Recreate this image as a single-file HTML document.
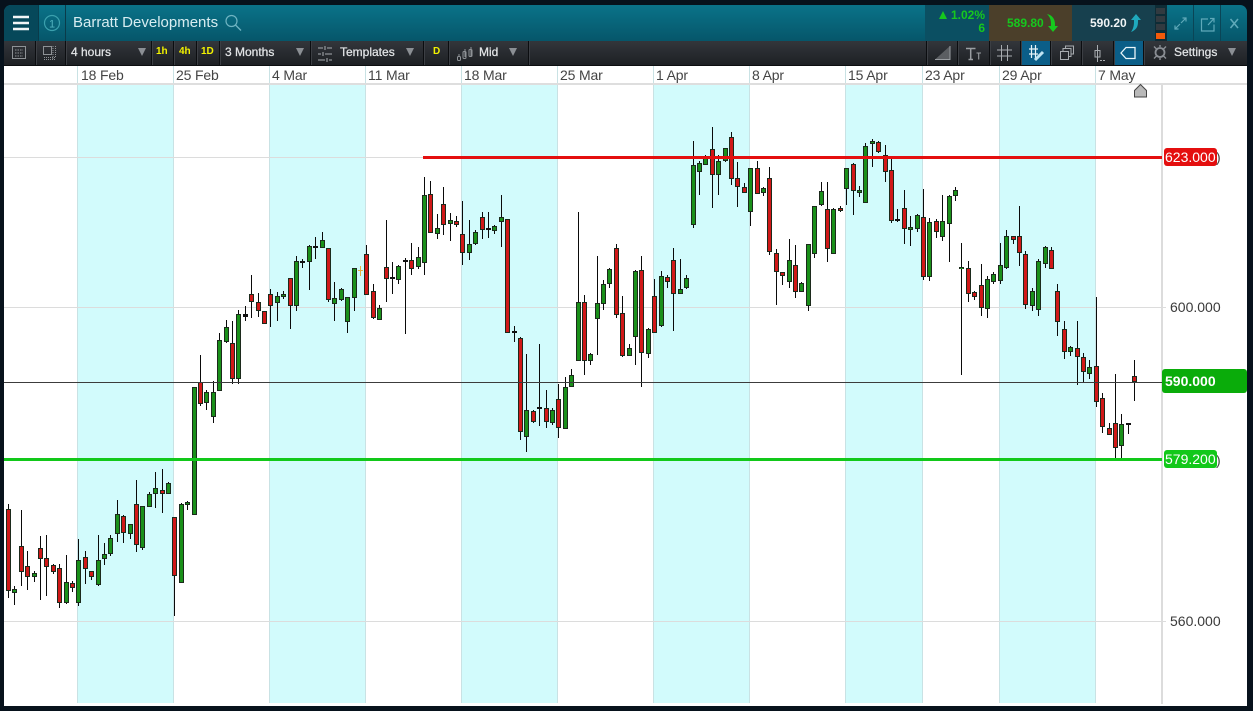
<!DOCTYPE html>
<html><head><meta charset="utf-8"><style>
html,body{margin:0;padding:0;width:1253px;height:711px;overflow:hidden;background:#07121c;font-family:"Liberation Sans",sans-serif}
.a{position:absolute}
#top{left:4px;top:5px;width:1243px;height:36px;background:linear-gradient(#0a7389,#06566a);border-radius:7px 7px 0 0;overflow:hidden}
#tb{left:4px;top:41px;width:1243px;height:24px;background:linear-gradient(#33363b,#1d2024)}
.sep{position:absolute;top:41px;width:1px;height:24px;background:#0b0d10;box-shadow:1px 0 0 #3c3f44}
.t{position:absolute;color:#e2e4e6;font-size:12px;line-height:14px;top:45px;white-space:nowrap;-webkit-text-stroke:.25px #e2e4e6}
.y{position:absolute;color:#f2f200;font-size:10px;font-weight:bold;top:46px;line-height:12px}
.arr{position:absolute;top:48px;width:0;height:0;border-left:4px solid transparent;border-right:4px solid transparent;border-top:8px solid #8b8f94}
.d{position:absolute;top:67px;font-size:14px;line-height:16px;color:#444;letter-spacing:-.15px;white-space:nowrap}
.p{position:absolute;left:1170px;font-size:14px;line-height:16px;color:#3a3a3a}
.tag{position:absolute;left:1164px;width:53px;height:18px;border-radius:3px;color:#fff;font-size:14px;line-height:18px;text-indent:1px;white-space:nowrap}
</style></head><body>
<div class="a" style="left:4px;top:65px;width:1243px;height:641px;background:#fff"></div>

<svg class="a" id="c" style="left:0;top:0" width="1253" height="711" viewBox="0 0 1253 711" shape-rendering="crispEdges">
<g fill="#d2fbfc">
<rect x="77" y="84" width="96" height="619"/><rect x="269" y="84" width="96" height="619"/><rect x="461" y="84" width="96" height="619"/><rect x="653" y="84" width="96" height="619"/><rect x="845" y="84" width="77" height="619"/><rect x="999" y="84" width="96" height="619"/>
</g>
<path d="M77.5 66V703M173.5 66V703M269.5 66V703M365.5 66V703M461.5 66V703M557.5 66V703M653.5 66V703M749.5 66V703M845.5 66V703M922.5 66V703M999.5 66V703M1095.5 66V703" stroke="#c9e2e4" fill="none"/>
<rect x="4" y="83" width="1243" height="2" fill="#dedede"/>
<rect x="1161" y="85" width="2" height="619" fill="#dcdcdc"/>
<path d="M4 157.5H1162M4 307.5H1166M4 621.5H1166" stroke="#dcdcdc" fill="none"/>
<g id="cs"></g>
<rect x="4" y="382" width="1158" height="1" fill="#3c3c3c"/>
<rect x="423" y="156" width="739" height="3" fill="#e40f0f"/>
<rect x="4" y="458" width="1158" height="3" fill="#12c81a"/>
<path d="M1134.500 90.500L1140.500 84.500L1146.500 90.500V97H1134.500Z" fill="#b9b9b9" stroke="#444" shape-rendering="auto"/>
</svg>

<div class="d" style="left:81px">18 Feb</div><div class="d" style="left:176px">25 Feb</div><div class="d" style="left:272px">4 Mar</div><div class="d" style="left:368px">11 Mar</div><div class="d" style="left:464px">18 Mar</div><div class="d" style="left:560px">25 Mar</div><div class="d" style="left:656px">1 Apr</div><div class="d" style="left:752px">8 Apr</div><div class="d" style="left:848px">15 Apr</div><div class="d" style="left:925px">23 Apr</div><div class="d" style="left:1002px">29 Apr</div><div class="d" style="left:1098px">7 May</div>

<div class="p" style="top:299px">600.000</div>
<div class="p" style="top:613px">560.000</div>
<div class="a" style="left:1216px;top:149px;font-size:14px;line-height:16px;color:#444">)</div>
<div class="tag" style="top:148px;background:#e40f0f">623.000</div>
<div class="a" style="left:1216px;top:452px;font-size:14px;line-height:16px;color:#444">)</div>
<div class="tag" style="top:450px;background:#12c81a">579.200</div>
<div class="a" style="left:1162px;top:369px;width:85px;height:24px;background:#0aac0a;border-radius:3px;color:#fff;font-size:14px;font-weight:bold;line-height:24px;text-indent:3px">590.000</div>

<div class="a" id="top"></div>
<div class="a" style="left:4px;top:5px;width:34px;height:36px;background:#06485a;border-radius:7px 0 0 0"></div>
<div class="a" style="left:38px;top:5px;width:1px;height:36px;background:#0a3b4a"></div>
<div class="a" style="left:65px;top:5px;width:1px;height:36px;background:#0a3b4a"></div>
<svg class="a" style="left:0;top:0" width="80" height="41"><path d="M13 17H29M13 23H29M13 29H29" stroke="#f2f6f7" stroke-width="2.400"/><circle cx="52" cy="23" r="7.500" fill="none" stroke="#3aa0ad" stroke-width="1.200"/><text x="52" y="27.500" font-size="11" fill="#52b2be" text-anchor="middle" font-family="Liberation Sans">1</text></svg>
<div class="a" style="left:73px;top:14px;font-size:15px;line-height:18px;color:#d7edf1;white-space:nowrap">Barratt Developments</div>
<svg class="a" style="left:224px;top:13px" width="20" height="20"><circle cx="7.500" cy="8" r="5.500" fill="none" stroke="#6fb4c2" stroke-width="1.200"/><path d="M11.500 12L17 17.500" stroke="#6fb4c2" stroke-width="1.300"/></svg>

<div class="a" style="left:925px;top:5px;width:64px;height:36px;background:#0b4f62"></div>
<div class="a" style="left:989px;top:5px;width:83px;height:36px;background:#4b3f2a"></div>
<div class="a" style="left:1072px;top:5px;width:83px;height:36px;background:#17404e"></div>
<div class="a" style="left:1155px;top:5px;width:12px;height:36px;background:#0e2c36"></div>
<div class="a" style="left:1156px;top:8px;width:9px;height:6px;background:#323a40"></div>
<div class="a" style="left:1156px;top:16px;width:9px;height:6px;background:#323a40"></div>
<div class="a" style="left:1156px;top:24px;width:9px;height:6px;background:#323a40"></div>
<div class="a" style="left:1156px;top:33px;width:9px;height:6px;background:#f25a0a"></div>
<div class="a" style="left:1193px;top:5px;width:1px;height:36px;background:#0a4556"></div>
<div class="a" style="left:1220px;top:5px;width:1px;height:36px;background:#0a4556"></div>
<div class="a" style="left:925px;top:9px;width:60px;text-align:right;color:#16c81e;font-size:12px;font-weight:bold;line-height:13px">1.02%<br>6</div>
<div class="a" style="left:939px;top:11px;width:0;height:0;border-left:4.500px solid transparent;border-right:4.500px solid transparent;border-bottom:8px solid #16c81e"></div>
<div class="a" style="left:1007px;top:16px;color:#16c81e;font-size:12px;font-weight:bold;line-height:14px">589.80</div>
<div class="a" style="left:1090px;top:16px;color:#f0f4f5;font-size:12px;font-weight:bold;line-height:14px">590.20</div>
<svg class="a" style="left:1041px;top:12px" width="20" height="22"><path d="M6 2C11 3 14 7 14 12V14H17L12 20L7 14H10V12C10 8 9 5 6 2Z" fill="#16c81e"/></svg>
<svg class="a" style="left:1124px;top:12px" width="20" height="22"><path d="M7 20C12 18 14 15 14 10V8H17L12 2L7 8H10V10C10 14 9 17 7 20Z" fill="#1fa9bd"/></svg>
<svg class="a" style="left:1167px;top:5px" width="80" height="36" fill="none" stroke="#5fa9b9" stroke-width="1.200"><path d="M14 18L19 13M15.500 13H19V16.500M13 19L8 24M8 20.500V24H11.500"/><path d="M41 14H34.500V26H47V19.500M41 20L47 13.500M43 13.500H47V17.500"/><path d="M63.500 14L71 23M71 14L63.500 23" stroke-width="1.600"/></svg>

<div class="a" id="tb"></div>
<div class="a" style="left:1020px;top:41px;width:30px;height:24px;background:#0b5e88"></div>
<div class="a" style="left:1113px;top:41px;width:30px;height:24px;background:#0b5e88"></div>
<div class="a" style="left:4px;top:65px;width:1243px;height:1px;background:#0c0e10"></div>
<div class="sep" style="left:35px"></div><div class="sep" style="left:65px"></div><div class="sep" style="left:151px"></div><div class="sep" style="left:173px"></div><div class="sep" style="left:196px"></div><div class="sep" style="left:219px"></div><div class="sep" style="left:310px"></div><div class="sep" style="left:423px"></div><div class="sep" style="left:448px"></div><div class="sep" style="left:528px"></div><div class="sep" style="left:926px"></div><div class="sep" style="left:957px"></div><div class="sep" style="left:989px"></div><div class="sep" style="left:1020px"></div><div class="sep" style="left:1050px"></div><div class="sep" style="left:1081px"></div><div class="sep" style="left:1113px"></div><div class="sep" style="left:1143px"></div>

<svg class="a" style="left:0;top:41px" width="530" height="24" fill="none" stroke="#8e9296">
<rect x="12.500" y="5.500" width="13" height="12"/><path d="M15 9H23M15 12H23M15 15H23" stroke-dasharray="1.500 1"/>
<rect x="43.500" y="5.500" width="8" height="8"/><path d="M44 16.500H55.500V5M44 18.500H55.500M53 5V18.500" stroke-dasharray="1 1"/>
<path d="M318 7H323M327 7H332M318 13H321M325 13H332M318 19H325M329 19H332" stroke-width="1.300"/><path d="M325 5V9M323 11V15M327 17V21" stroke-width="1.300"/>
<path d="M459 13V15M465 8V16M471 6V15" stroke="#8e9296"/><rect x="457.500" y="15.500" width="3" height="4" rx="1"/><rect x="463" y="10.500" width="3" height="7" rx="1"/><rect x="469" y="8.500" width="3" height="7" rx="1"/>
</svg>
<svg class="a" style="left:926px;top:41px" width="320" height="24" fill="none" stroke="#a8acb0" shape-rendering="auto">
<path d="M9 18.500H24V5Z" fill="#5b5e62" stroke="none"/><path d="M9 18.500H24V5" stroke="#9a9ea2"/>
<path d="M40 7.500H49.500M44.700 7.500V18.500M42.500 18.500H47" stroke-width="1.500" stroke="#9a9ea2"/><path d="M50.500 12H55M52.700 12V18.500" stroke-width="1.100" stroke="#9a9ea2"/>
<path d="M71 9H86M71 15H86M75.500 4V20M81.500 4V20" stroke="#a8acb0"/>
<path d="M103 8H112M103 13H112M105.500 4V17M109.500 4V17" stroke="#e8f4f8" stroke-width="1.200"/><path d="M109 19L117 11" stroke="#bfe4f2" stroke-width="3"/>
<rect x="134.500" y="10.500" width="8" height="8"/><path d="M137 10V7.500H145V15.500H143M139.500 7V5H147.500V13H145.500"/>
<path d="M171.500 4V21" stroke="#a8acb0"/><rect x="169" y="9.500" width="5" height="6.500"/><path d="M174 19.500H179" stroke-dasharray="2 1"/>
<path d="M195 12L200 6.500H209V17.500H200Z" stroke="#eaf6fa" stroke-width="1.300"/>
<circle cx="234" cy="11.500" r="4.500" stroke="#8a8e94" stroke-width="1.800"/><path d="M234 4V6M234 17V19M228 5.500L230.500 8M240 5.500L237.500 8M228 17.500L230.500 15M240 17.500L237.500 15" stroke="#8a8e94" stroke-width="1.400"/>
</svg>

<div class="t" style="left:71px">4 hours</div>
<div class="arr" style="left:138px"></div>
<div class="y" style="left:156px">1h</div><div class="y" style="left:179px">4h</div><div class="y" style="left:201px">1D</div>
<div class="t" style="left:225px">3 Months</div>
<div class="arr" style="left:296px"></div>
<div class="t" style="left:340px">Templates</div>
<div class="arr" style="left:406px"></div>
<div class="y" style="left:433px">D</div>
<div class="t" style="left:479px">Mid</div>
<div class="arr" style="left:509px"></div>
<div class="t" style="left:1174px">Settings</div>
<div class="arr" style="left:1228px"></div>

<script>
var D=[[8,504,598,509,591,'r'],[14,586,605,589,593,'g'],[20.5,510,586,546,572,'r'],[27,551,590,566,577,'r'],[34,571,582,573,577,'g'],[40,536,600,548,559,'r'],[46,535,596,558,567,'r'],[53,564,574,565,572,'r'],[59,564,608,568,603,'r'],[66,555,604,582,603,'g'],[72,581,592,583,588,'r'],[78,539,606,560,603,'g'],[85,551,584,557,569,'r'],[91,571,580,571,577,'r'],[98,535,586,560,585,'g'],[104,543,565,554,559,'g'],[110,535,556,538,554,'g'],[117,500,542,514,534,'g'],[123,515,543,516,533,'r'],[130,524,539,524,534,'g'],[136,480,552,504,545,'r'],[142,506,550,506,548,'g'],[149,492,507,494,507,'g'],[155,472,508,488,494,'g'],[162,469,513,490,494,'r'],[168,482,494,483,494,'g'],[174,517,616,517,576,'r'],[181,503,583,504,583,'g'],[187,501,510,502,505,'g'],[194,387,515,387,515,'g'],[200,355,406,382,404,'r'],[206,390,410,392,403,'g'],[213,381,423,392,417,'g'],[219,333,391,340,391,'g'],[226,320,343,327,342,'g'],[232,321,384,343,379,'r'],[238,310,384,314,379,'g'],[245,306,321,314,317,'k'],[251,275,318,294,302,'r'],[258,293,317,302,311,'r'],[264,311,324,311,324,'r'],[270,289,327,294,306,'r'],[277,292,321,296,303,'g'],[283,291,299,294,297,'g'],[290,278,329,278,306,'r'],[296,256,311,261,306,'g'],[302,259,268,261,263,'k'],[309,245,290,246,262,'g'],[315,237,259,246,248,'k'],[322,232,248,240,248,'g'],[328,248,302,248,300,'r'],[334,282,321,298,304,'g'],[341,288,301,289,300,'g'],[347,297,333,297,322,'g'],[354,268,311,268,298,'g'],[360,266,276,270,271,'o'],[366,245,295,254,295,'r'],[373,284,319,291,318,'r'],[379,305,320,308,320,'g'],[386,220,302,267,279,'r'],[392,262,294,277,279,'k'],[398,265,284,266,280,'g'],[405,258,334,260,262,'k'],[411,243,275,260,269,'r'],[418,247,269,257,267,'g'],[424,177,275,195,263,'g'],[430,181,233,194,233,'r'],[437,214,239,228,234,'g'],[443,187,235,204,225,'r'],[450,213,241,220,224,'g'],[456,216,227,221,225,'r'],[462,201,265,234,253,'r'],[469,220,260,244,253,'g'],[475,230,245,232,244,'g'],[482,212,239,217,230,'r'],[488,212,238,228,230,'k'],[494,225,234,226,231,'g'],[501,195,247,217,222,'g'],[507,219,333,219,333,'r'],[514,326,342,331,333,'k'],[520,337,440,338,432,'r'],[526,354,452,410,437,'g'],[533,410,423,411,422,'r'],[539,344,426,407,409,'k'],[546,390,428,408,422,'r'],[552,408,425,410,423,'g'],[558,384,438,399,428,'r'],[565,377,429,387,429,'g'],[571,369,387,375,387,'g'],[578,212,361,302,361,'g'],[584,295,375,302,361,'r'],[590,353,365,354,361,'g'],[597,256,355,303,319,'g'],[603,280,310,284,304,'g'],[609,268,288,269,284,'g'],[616,244,318,248,315,'r'],[622,296,357,313,356,'r'],[629,344,356,348,356,'g'],[635,270,365,271,337,'g'],[641,256,387,270,353,'r'],[648,328,358,329,354,'g'],[654,279,333,296,333,'r'],[661,271,327,276,326,'g'],[667,275,288,277,282,'r'],[673,248,331,260,294,'r'],[680,259,294,289,294,'g'],[686,275,289,278,288,'g'],[693,141,228,165,225,'g'],[699,161,195,163,172,'g'],[705,155,165,157,165,'g'],[712,127,208,149,175,'r'],[718,155,195,161,175,'g'],[725,148,162,148,161,'g'],[731,132,185,137,179,'r'],[737,162,207,178,187,'r'],[744,183,193,187,193,'r'],[750,168,226,168,212,'g'],[757,161,194,168,194,'r'],[763,187,196,188,193,'g'],[769,167,255,178,252,'r'],[776,249,305,253,272,'r'],[782,272,285,272,276,'r'],[789,239,288,260,282,'g'],[795,245,298,265,292,'r'],[801,282,292,283,292,'g'],[808,244,311,244,306,'g'],[814,206,258,206,254,'g'],[821,182,206,191,205,'g'],[827,182,262,209,249,'r'],[833,208,254,209,254,'g'],[840,206,212,208,211,'r'],[846,168,205,168,189,'g'],[853,163,215,164,191,'r'],[859,186,197,190,193,'g'],[865,143,203,146,203,'g'],[872,139,167,141,144,'g'],[878,141,153,142,152,'r'],[885,145,182,155,172,'r'],[891,159,223,170,221,'r'],[897,209,222,219,221,'k'],[904,190,244,208,229,'r'],[910,216,246,227,230,'g'],[917,214,232,215,229,'g'],[923,189,280,217,277,'r'],[929,218,281,222,277,'g'],[936,219,238,221,232,'r'],[942,195,241,221,237,'g'],[949,195,262,196,224,'g'],[955,187,201,190,196,'g'],[961,243,375,267,269,'g'],[968,261,302,268,294,'r'],[974,291,300,292,297,'r'],[981,264,316,285,308,'r'],[987,276,318,279,309,'g'],[993,272,284,274,282,'g'],[1000,243,284,265,281,'g'],[1006,230,269,236,268,'g'],[1013,236,244,236,240,'r'],[1019,206,266,236,253,'r'],[1025,251,309,254,305,'r'],[1032,288,311,291,306,'g'],[1038,259,316,261,310,'g'],[1045,246,268,247,264,'g'],[1051,247,269,250,269,'r'],[1057,284,336,291,322,'r'],[1064,321,359,329,352,'r'],[1070,346,356,347,352,'g'],[1077,321,385,348,357,'r'],[1083,353,383,357,372,'r'],[1089,360,379,367,374,'g'],[1096,297,407,366,402,'r'],[1102,393,433,398,427,'r'],[1109,423,435,428,435,'r'],[1115,374,458,423,448,'r'],[1121,414,458,424,446,'g'],[1128,423,434,423,425,'k'],[1134,360,401,376,382,'r']];
var F={r:'#d01818',g:'#1a901a',k:'#111',o:'#e8b040'},s='';
D.forEach(function(c){var x=Math.round(c[0]);
s+='<rect x="'+x+'" y="'+c[1]+'" width="1" height="'+(c[2]-c[1])+'" fill="'+(c[5]=='o'?'#e8b040':'#0a0a0a')+'"/>';
if(c[5]=='k'||c[5]=='o'){s+='<rect x="'+(x-2)+'" y="'+c[3]+'" width="5" height="'+Math.max(c[4]-c[3],1)+'" fill="'+F[c[5]]+'"/>';}
else{s+='<rect x="'+(x-2)+'" y="'+c[3]+'" width="5" height="'+(c[4]-c[3])+'" fill="#1c2a1c"/><rect x="'+(x-1)+'" y="'+(c[3]+1)+'" width="3" height="'+Math.max(c[4]-c[3]-2,1)+'" fill="'+F[c[5]]+'"/>';}
});
document.getElementById('cs').innerHTML=s;
</script>
</body></html>
